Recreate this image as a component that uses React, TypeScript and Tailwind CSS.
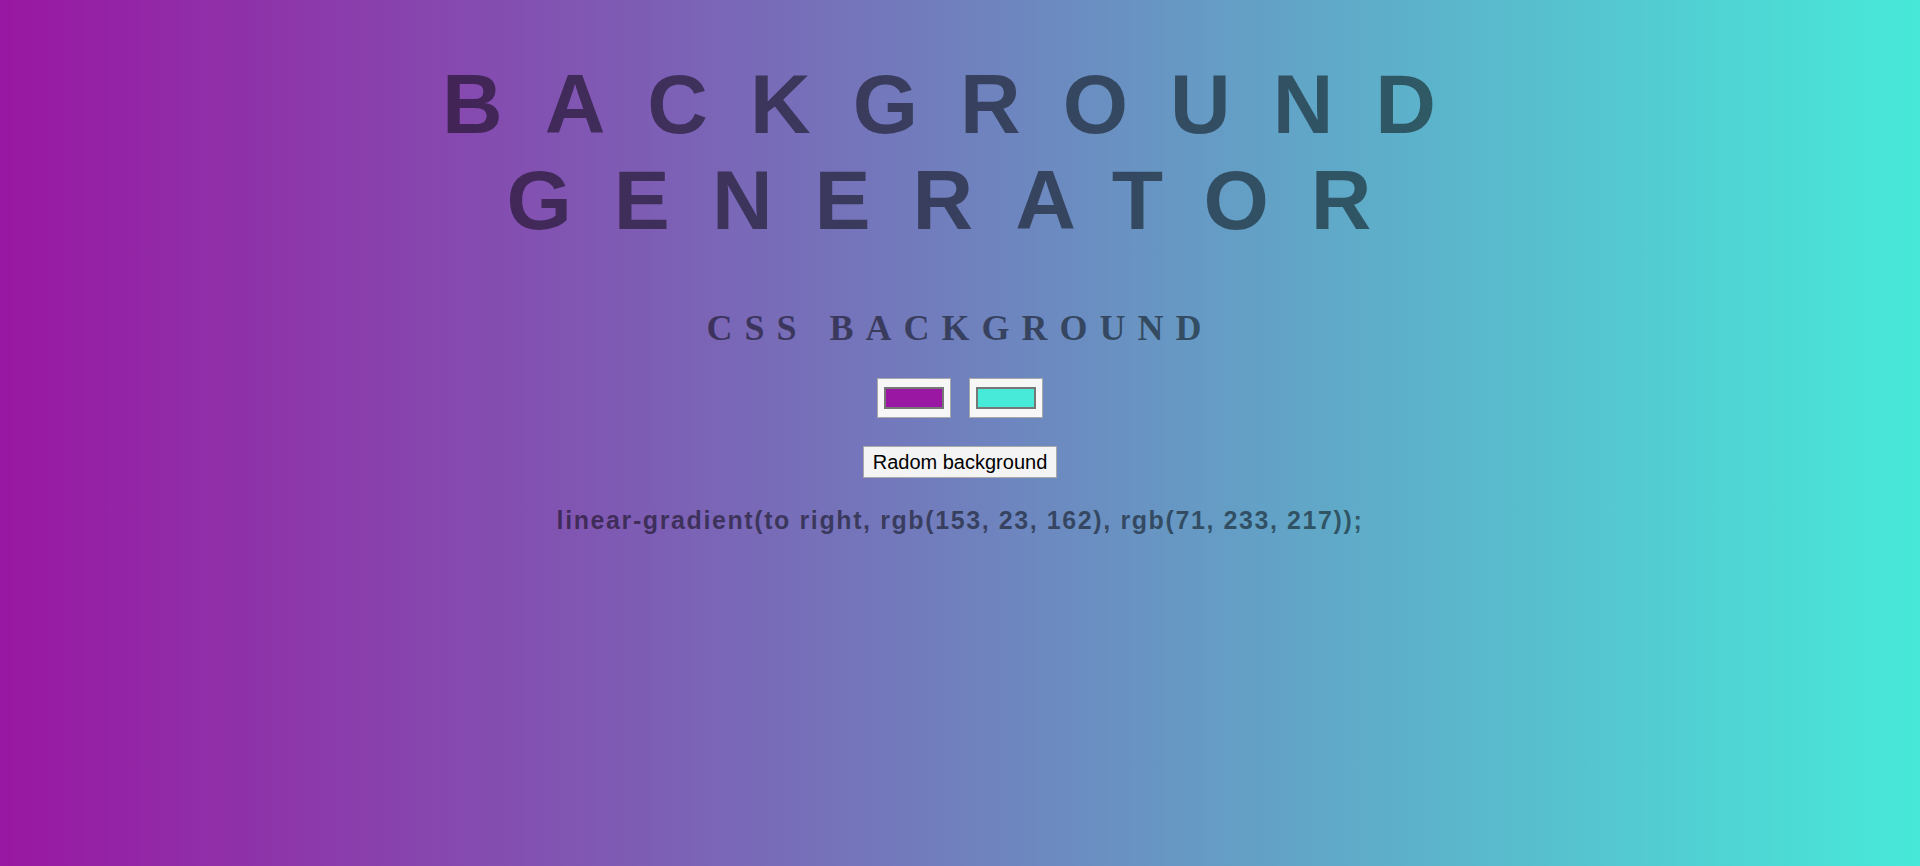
import { useState } from "react";

const toHex = (r: number, g: number, b: number) =>
  "#" + [r, g, b].map(v => v.toString(16).padStart(2, "0")).join("");

export default function App() {
  const [color1, setColor1] = useState({ r: 153, g: 23, b: 162 });
  const [color2, setColor2] = useState({ r: 71, g: 233, b: 217 });

  const rgb = (c: { r: number; g: number; b: number }) => `rgb(${c.r}, ${c.g}, ${c.b})`;
  const gradient = `linear-gradient(to right, ${rgb(color1)}, ${rgb(color2)})`;

  const randomColor = () => ({
    r: Math.floor(Math.random() * 256),
    g: Math.floor(Math.random() * 256),
    b: Math.floor(Math.random() * 256),
  });

  return (
    <div
      className="min-h-screen w-full text-center text-black/50 font-['Liberation_Sans',Arial,sans-serif]"
      style={{ background: gradient }}
    >
      <h1 className="pt-[56px] text-[84px] leading-[96px] font-bold tracking-[42px] uppercase">
        Background Generator
      </h1>

      <h3 className="mt-[60px] text-[36px] leading-[40px] font-bold tracking-[12px] uppercase font-['Liberation_Serif','Times_New_Roman',serif]">
        CSS Background
      </h3>

      <div className="mt-[30px] flex justify-center gap-[18px]">
        {[color1, color2].map((c, i) => (
          <div
            key={i}
            className="w-[74px] h-[40px] bg-[#f7f7f7] border border-[#a9a9a9] flex items-center justify-center"
          >
            <div
              className="w-[60px] h-[22px] border-2 border-[#777777]"
              style={{ backgroundColor: toHex(c.r, c.g, c.b) }}
            />
          </div>
        ))}
      </div>

      <div className="mt-[28px] flex justify-center">
        <button
          className="h-[32px] px-[9px] bg-[#f4f4f4] border border-[#a9a9a9] text-black text-[20px] leading-[24px] font-['Liberation_Sans',Arial,sans-serif]"
          onClick={() => {
            setColor1(randomColor());
            setColor2(randomColor());
          }}
        >
          Radom background
        </button>
      </div>

      <h3 className="mt-[28px] text-[25px] leading-[28px] font-bold tracking-[1.6px]">
        {gradient};
      </h3>
    </div>
  );
}
